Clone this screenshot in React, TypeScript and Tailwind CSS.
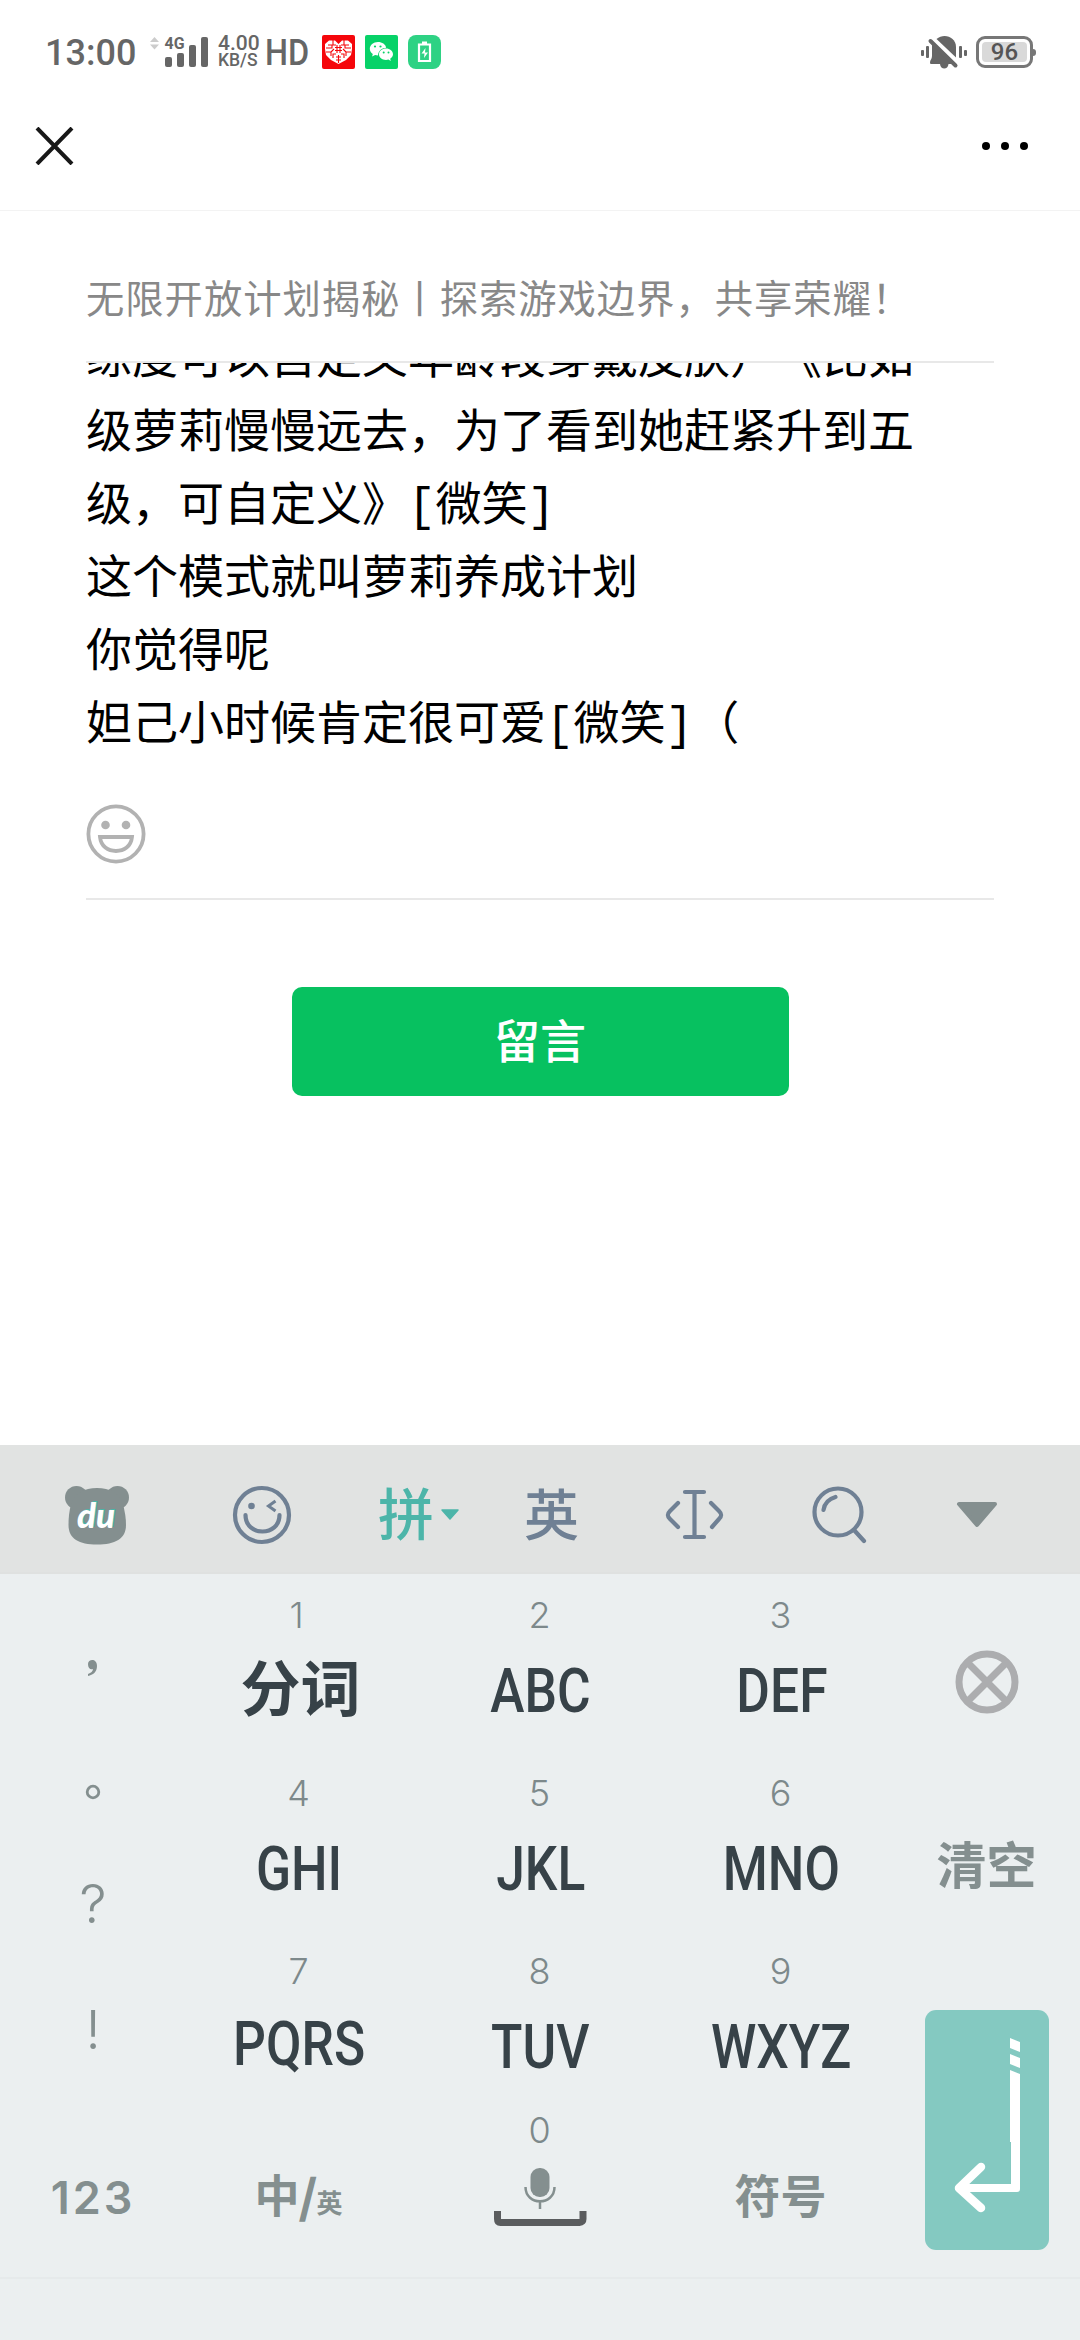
import type { ReactNode } from "react";

const commentLines = [
  "练度可以自定义年龄段穿戴皮肤）《比如",
  "级萝莉慢慢远去，为了看到她赶紧升到五",
  "级，可自定义》[微笑]",
  "这个模式就叫萝莉养成计划",
  "你觉得呢",
  "妲己小时候肯定很可爱[微笑]（",
];

function SignalIcon() {
  return (
    <svg width="60" height="40" viewBox="0 -6 60 40" className="-mt-[6px] ml-[14px]">
      <path d="M1 7 5.500 2 10 7ZM1 9.500h9L5.500 14.500Z" fill="#ccc" />
      <g fill="#666">
        <rect x="16" y="22" width="7" height="10" rx="2" />
        <rect x="28" y="18" width="7" height="14" rx="2" />
        <rect x="40" y="10" width="7" height="22" rx="2" />
        <rect x="52" y="2" width="7" height="30" rx="2" />
        <text x="15.500" y="14" fontSize="17" fontWeight="700" textLength="20" lengthAdjust="spacingAndGlyphs">4G</text>
      </g>
    </svg>
  );
}

function HeartAppIcon() {
  return (
    <svg width="33" height="34" viewBox="0 0 33 34">
      <rect width="33" height="34" rx="2" fill="#f5060b" />
      <path d="M16.500 29 9 25 4 20 3 14V9l4-3.500h6l3.500 3.500L20 5.500h6L30 9v5l-1 6-5 5Z" fill="#fff" />
      <path
        d="M6 10h4v3H4M11 5v5h3M4 17h5v4M9 17l3-3M11 23v-4h3M22 5v5h-3M27 10h-4v3h6M29 17h-5v4M24 17l-3-3M22 23v-4h-3M13 12.500h7M13 15.500h7M15 10v8M18 10v8M14 22h5M14 25h5M16.500 20v8"
        fill="none"
        stroke="#f5060b"
        strokeWidth="1.100"
      />
    </svg>
  );
}

function WechatAppIcon() {
  return (
    <svg width="33" height="34" viewBox="0 0 33 34">
      <rect width="33" height="34" rx="2" fill="#07d268" />
      <path d="M13 7c-4.700 0-8.200 3-8.200 6.800 0 2.200 1.200 4 3 5.300l-.7 2.500 3-1.500c1 .3 1.900.4 2.900.4.300-5 4-7.800 8.200-7.800C20.500 9.300 17.200 7 13 7Z" fill="#fff" />
      <path d="M21 13.500c-4 0-7 2.600-7 5.800s3 5.700 7 5.700c.8 0 1.600-.1 2.400-.4l2.400 1.300-.6-2.200c1.700-1 2.800-2.600 2.800-4.400 0-3.200-3-5.800-7-5.800Z" fill="#fff" />
      <g fill="#07d268">
        <circle cx="10" cy="11.500" r="1.100" />
        <circle cx="15.500" cy="11.500" r="1.100" />
        <circle cx="18.700" cy="17.500" r="1" />
        <circle cx="23.500" cy="17.500" r="1" />
      </g>
    </svg>
  );
}

function BatteryAppIcon() {
  return (
    <svg width="33" height="34" viewBox="0 0 33 34">
      <rect width="33" height="34" rx="8" fill="#2ed284" />
      <path d="M11 9.500h11v16.500H11Z" fill="none" stroke="#fff" strokeWidth="2.200" />
      <path d="M14 6.500h5V9h-5Z" fill="#fff" />
      <path d="m17.500 13-4 5.500h3L16 23l4-5.500h-3Z" fill="#fff" />
    </svg>
  );
}

function MutedBellIcon() {
  return (
    <svg width="47" height="36" viewBox="0 0 47 36" fill="#666">
      <rect y="15" width="3" height="6" rx="1" />
      <rect x="5" y="11" width="3" height="12" rx="1" />
      <rect x="38" y="11" width="3" height="12" rx="1" />
      <rect x="43" y="15" width="3" height="6" rx="1" />
      <path d="M11 9v12c0 3-2 4-2 6.500 0 1 .5 1.500 1.500 1.500H19c.5 6 8 6 8.500 0h5Z" />
      <path d="M15.500 4C23 -2.500 35 2 35 12v10.500Z" />
      <path d="m9.500 6 25 24.500" stroke="#666" strokeWidth="4" strokeLinecap="round" />
    </svg>
  );
}

function StatusBar() {
  return (
    <header className="flex h-[104px] items-start justify-between pt-[35px] pr-[44px] pl-[45px] font-[Roboto] text-[#666]">
      <div className="flex">
        <span className="w-[90px] text-[36px] leading-[37px] font-medium">13:00</span>
        <SignalIcon />
        <div className="ml-[9px] flex w-[42px] flex-col font-medium">
          <span className="text-[21px] leading-[17px]">4.00</span>
          <span className="text-[17.500px] leading-[17px]">KB/S</span>
        </div>
        <span className="ml-[5px] w-[57px] origin-left scale-x-[.9] text-[36px] leading-[36px] font-medium">HD</span>
        <div className="flex gap-[10px]">
          <HeartAppIcon />
          <WechatAppIcon />
          <BatteryAppIcon />
        </div>
      </div>
      <div className="flex gap-2">
        <MutedBellIcon />
        <div className="flex h-[34px] items-center">
          <div className="flex h-8 w-[57px] rounded-[9px] border-[3px] border-[#777] p-[3px]">
            <div className="flex flex-1 items-center justify-center rounded-[4px] bg-[#d9d9d9] text-[24px] leading-none font-medium text-[#555]">96</div>
          </div>
          <div className="h-[7px] w-[3px] rounded-r-full bg-[#777]" />
        </div>
      </div>
    </header>
  );
}

function TitleBar() {
  return (
    <nav className="flex h-[107px] items-start justify-between border-b border-[#f3f3f3] pt-[23px] pr-[52px] pl-[35px]">
      <svg width="39" height="38" viewBox="0 0 39 38">
        <path d="m2 1 35 36M37 1 2 37" stroke="#181818" strokeWidth="4" />
      </svg>
      <div className="mt-[15px] flex gap-[11px]">
        <i className="size-2 rounded-full bg-black" />
        <i className="size-2 rounded-full bg-black" />
        <i className="size-2 rounded-full bg-black" />
      </div>
    </nav>
  );
}

function CommentForm() {
  return (
    <main className="flex h-[1234px] flex-col px-[86px] font-['Noto_Sans_CJK_SC',sans-serif]">
      <h1 className="h-[150px] pt-[57px] text-[38.300px] leading-[58px] tracking-[1px] whitespace-nowrap text-[#888]">
        无限开放计划揭秘丨探索游戏边界，共享荣耀！
      </h1>
      <div className="flex h-[539px] flex-col border-y-2 border-[#e8e8e8]">
        <div className="flex h-[401px] flex-col justify-end overflow-hidden font-['Liberation_Mono','Noto_Sans_CJK_SC',monospace] text-[46px] leading-[73.100px] whitespace-nowrap text-black [text-spacing-trim:space-all]">
          {commentLines.map((line) => (
            <p key={line} className="h-[73.100px] shrink-0">{line}</p>
          ))}
        </div>
        <svg width="60" height="60" viewBox="0 0 60 60" className="mt-[40px]" fill="none" stroke="#b2b2b2" strokeWidth="3.800">
          <circle cx="30" cy="30" r="27.600" />
          <circle cx="19.500" cy="21" r="4.300" fill="#b2b2b2" stroke="none" />
          <circle cx="40" cy="21" r="4.300" fill="#b2b2b2" stroke="none" />
          <path d="M14 33h32c-1 9.500-8 14-16 14s-15-4.500-16-14Z" />
        </svg>
      </div>
      <button className="mt-[87px] h-[109px] w-[497px] self-center rounded-[10px] bg-[#07c160] pb-[6px] text-[46px] font-medium text-white">
        留言
      </button>
    </main>
  );
}

function KeyboardToolbar() {
  return (
    <div className="flex h-[129px] items-center border-b-2 border-[#dfe1e0] bg-[#e1e3e2] pb-[2px] font-['Noto_Sans_CJK_SC',sans-serif] font-medium text-[#6f8094]">
      <svg width="66" height="60" viewBox="0 0 66 60" className="mt-[14px] ml-[64px]">
        <g fill="#848f8f">
          <circle cx="12.500" cy="12.500" r="11.500" />
          <circle cx="53.500" cy="12.500" r="11.500" />
          <path d="M33 3c13 0 22 6 25.500 15 2.500 8 3.500 15 3.500 22 0 14-11 19.500-29 19.500S4.500 54 4.500 40c0-7 .5-14 3-22C11 9 20 3 33 3Z" />
        </g>
        <g className="font-['Lato']" fontSize="35" fontWeight="900" fontStyle="italic" textAnchor="middle">
          <text x="33.500" y="42" fill="#4cb5a9" textLength="38" lengthAdjust="spacingAndGlyphs">du</text>
          <text x="32" y="43" fill="#fff" textLength="38" lengthAdjust="spacingAndGlyphs">du</text>
        </g>
      </svg>
      <svg width="60" height="60" viewBox="0 0 60 60" className="mt-[15px] ml-[102px]" fill="none" stroke="#6f8094" strokeWidth="4.200" strokeLinecap="round">
        <circle cx="30" cy="30" r="27" />
        <circle cx="19.500" cy="21" r="3.300" fill="#6f8094" stroke="none" />
        <path d="m43.500 16-7 5 7 5" strokeWidth="3" strokeLinecap="butt" />
        <path d="M13.500 30c0 22 34 22 34 0" />
      </svg>
      <span className="mt-[7px] ml-[86px] w-[62px] text-[56px] leading-[60px] text-[#4cb5a9]">拼</span>
      <svg width="20" height="12" viewBox="0 0 20 12" className="mt-[15px]">
        <path d="M2 1h16l-8 9Z" fill="#4cb5a9" stroke="#4cb5a9" strokeLinejoin="round" strokeWidth="1.500" />
      </svg>
      <span className="mt-[7px] ml-[64px] text-[55px] leading-[60px]">英</span>
      <svg width="60" height="52" viewBox="0 0 60 52" className="mt-[15px] ml-[86px]" fill="none" stroke="#6f8094" strokeWidth="4.200" strokeLinecap="round">
        <path d="M20 3h19M20 48h19M29.500 3v45M13 14 5 22c-3 3-3 5 0 8l8 8M46 14l8 8c3 3 3 5 0 8l-7 8" />
      </svg>
      <svg width="58" height="60" viewBox="0 0 58 60" className="mt-[15px] ml-[86px]" fill="none" stroke="#6f8094" strokeWidth="4.200" strokeLinecap="round">
        <circle cx="27" cy="27" r="23.500" />
        <path d="M12.500 25c1-7 5-11 12-13M43 45l10 11" />
      </svg>
      <svg width="42" height="28" viewBox="0 0 42 28" className="mt-[15px] ml-[87px]">
        <path d="M3 3h36L21 24Z" fill="#848f8f" stroke="#848f8f" strokeWidth="4" strokeLinejoin="round" />
      </svg>
    </div>
  );
}

type KeyProps = { digit: string; className?: string; children: ReactNode };

function LetterKey({ digit, className = "h-[178px] pt-[19px]", children }: KeyProps) {
  return (
    <div className={`flex flex-col items-center ${className}`}>
      <span className="font-[Inter] text-[36px] leading-[44px] font-light text-[#7d898b]">{digit}</span>
      <span className="mt-[18px] ml-[2px] origin-center scale-x-[.845] font-[Roboto] text-[61px] leading-[72px] font-medium text-[#374248]">{children}</span>
    </div>
  );
}

function Keyboard() {
  return (
    <section className="h-[766px] bg-[#ebeff0]">
      <div className="grid h-[705px] grid-cols-[186px_225px_257px_225px_187px] border-b-2 border-[#e6eaeb] text-[#848f8f]">
        <div className="flex flex-col items-center font-[Inter]">
          <svg width="12" height="18" viewBox="0 0 12 18" className="mt-[85px]">
            <path d="M1 5c0-5 9-6 9 2 0 6-4 9-9 10v-2c3-1 5-3 5-5-3 1-5-1-5-5Z" fill="#848f8f" />
          </svg>
          <svg width="16" height="16" viewBox="0 0 16 16" className="mt-[107px]">
            <circle cx="8" cy="8" r="5.800" fill="none" stroke="#848f8f" strokeWidth="2.800" />
          </svg>
          <span className="mt-[74px] text-[54px] leading-[60px] font-[350]">?</span>
          <span className="mt-[66px] text-[54px] leading-[60px] font-[350]">!</span>
          <span className="mt-[111px] text-[45px] leading-[54px] font-semibold tracking-[3px]">123</span>
        </div>

        <div className="flex flex-col">
          <div className="flex h-[178px] flex-col items-center pt-[19px]">
            <span className="-ml-[4px] font-[Inter] text-[36px] leading-[44px] font-light text-[#7d898b]">1</span>
            <span className="mt-[6px] ml-[4px] font-['Noto_Sans_CJK_SC',sans-serif] text-[60px] leading-[84px] font-bold text-[#374248]">分词</span>
          </div>
          <LetterKey digit="4">GHI</LetterKey>
          <LetterKey digit="7"><span className="-mt-[3px] mb-[3px] block">PQRS</span></LetterKey>
          <div className="mt-[53px] flex items-baseline justify-center font-['Noto_Sans_CJK_SC',sans-serif] font-bold">
            <span className="text-[45px] leading-[64px]">中</span>
            <span className="text-[44px] [-webkit-text-stroke:1.500px_#848f8f]">/</span>
            <span className="text-[26px]">英</span>
          </div>
        </div>

        <div className="flex flex-col">
          <LetterKey digit="2">ABC</LetterKey>
          <LetterKey digit="5">JKL</LetterKey>
          <LetterKey digit="8" className="h-[160px] pt-[19px]">TUV</LetterKey>
          <div className="flex flex-col items-center pt-[18px]">
            <span className="font-[Inter] text-[36px] leading-[44px] font-light text-[#7d898b]">0</span>
            <svg width="94" height="62" viewBox="0 0 94 62" className="mt-[15px]" fill="none">
              <rect x="37.500" y="1" width="19" height="29" rx="9" fill="#848f8f" />
              <path d="M32.500 20c0 19 29 19 29 0M47 35v7" stroke="#848f8f" strokeWidth="2.500" />
              <path d="M4.500 44v8c0 2 .5 3.500 3 3.500h79c2.500 0 3.500-1.500 3.500-3.500v-8" stroke="#5a5c5e" strokeWidth="7" />
            </svg>
          </div>
        </div>

        <div className="flex flex-col">
          <LetterKey digit="3">DEF</LetterKey>
          <LetterKey digit="6">MNO</LetterKey>
          <LetterKey digit="9">WXYZ</LetterKey>
          <span className="mt-[53px] text-center font-['Noto_Sans_CJK_SC',sans-serif] text-[46px] leading-[64px] font-bold">符号</span>
        </div>

        <div className="flex flex-col items-center">
          <svg width="64" height="64" viewBox="0 0 64 64" className="mt-[76px]" fill="none" stroke="#acadaf" strokeWidth="7">
            <circle cx="32" cy="32" r="28" />
            <path d="m13 13 38 38M51 13 13 51" />
          </svg>
          <span className="mt-[113px] font-['Noto_Sans_CJK_SC',sans-serif] text-[50px] leading-[70px] font-bold">清空</span>
          <div className="mt-[113px] h-[240px] w-[124px] rounded-[11px] bg-[#84c9c1]">
            <svg width="124" height="240" viewBox="0 0 124 240" fill="none">
              <path d="m85 28 10 4v10l-10-4ZM85 44l10 4v10l-10-4ZM85 60l10 4v115c0 2-1 3-3 3H35v-8h51v-42h-1Z" fill="#fff" />
              <path d="m56 157-22 21 22 20" stroke="#fff" strokeWidth="8.500" strokeLinecap="round" strokeLinejoin="round" />
            </svg>
          </div>
        </div>
      </div>
    </section>
  );
}

export default function App() {
  return (
    <div className="h-[2340px] w-[1080px] overflow-hidden bg-white">
      <StatusBar />
      <TitleBar />
      <CommentForm />
      <KeyboardToolbar />
      <Keyboard />
    </div>
  );
}
